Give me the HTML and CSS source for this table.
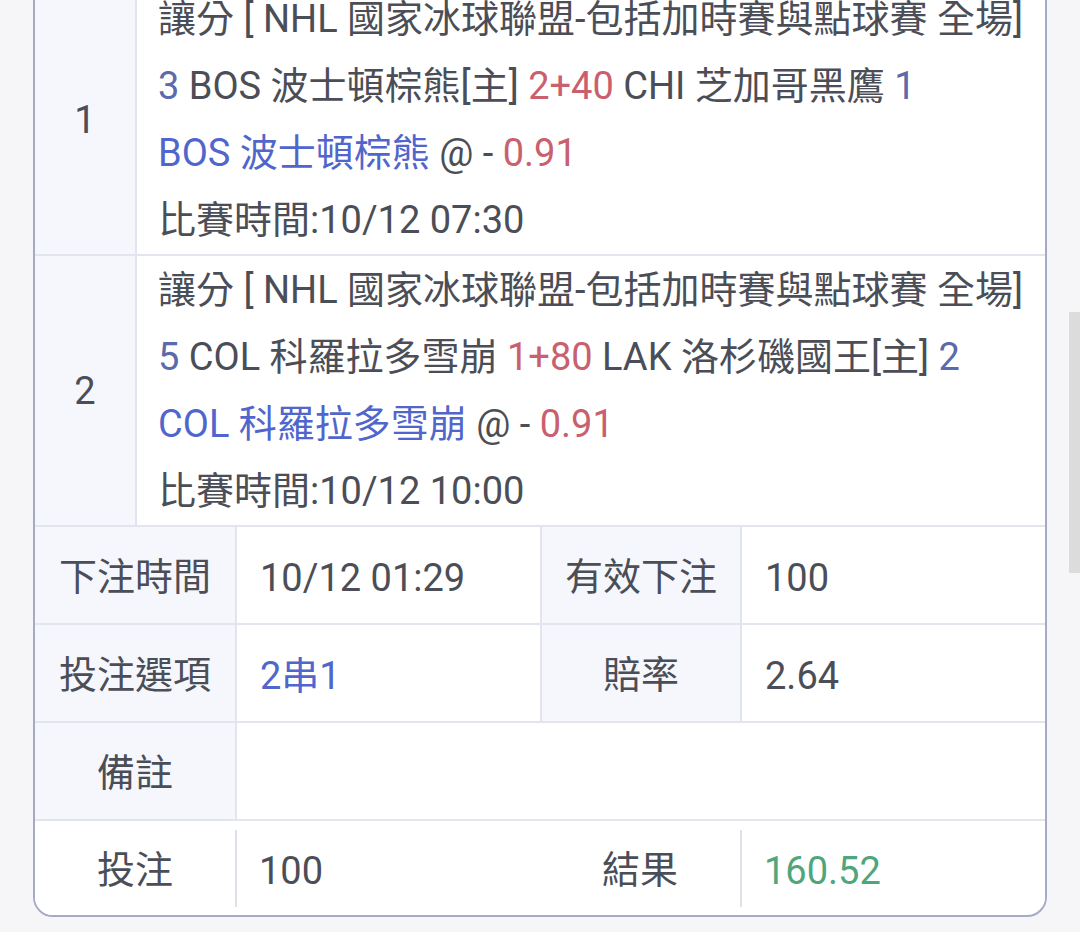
FILE: index.html
```html
<!DOCTYPE html>
<html lang="zh-Hant">
<head>
<meta charset="utf-8">
<title>注單詳情</title>
<link rel="stylesheet" href="styles.css">
</head>
<body>
<div class="card">
  <div class="leg">
    <div class="leg-idx">1</div>
    <div class="leg-body">
      <div class="line">讓分 [ NHL 國家冰球聯盟-包括加時賽與點球賽 全場]</div>
      <div class="line"><span class="score">3</span> BOS 波士頓棕熊[主] <span class="red">2+40</span> CHI 芝加哥黑鷹 <span class="score">1</span></div>
      <div class="line"><span class="blue">BOS 波士頓棕熊</span> @ - <span class="red">0.91</span></div>
      <div class="line">比賽時間:10/12 07:30</div>
    </div>
  </div>
  <div class="leg">
    <div class="leg-idx">2</div>
    <div class="leg-body">
      <div class="line">讓分 [ NHL 國家冰球聯盟-包括加時賽與點球賽 全場]</div>
      <div class="line"><span class="score">5</span> COL 科羅拉多雪崩 <span class="red">1+80</span> LAK 洛杉磯國王[主] <span class="score">2</span></div>
      <div class="line"><span class="blue">COL 科羅拉多雪崩</span> @ - <span class="red">0.91</span></div>
      <div class="line">比賽時間:10/12 10:00</div>
    </div>
  </div>
  <div class="row">
    <div class="lbl">下注時間</div>
    <div class="val">10/12 01:29</div>
    <div class="lbl lbl2">有效下注</div>
    <div class="val val2">100</div>
  </div>
  <div class="row">
    <div class="lbl">投注選項</div>
    <div class="val blue">2串1</div>
    <div class="lbl lbl2">賠率</div>
    <div class="val val2">2.64</div>
  </div>
  <div class="row">
    <div class="lbl">備註</div>
    <div class="val wide"></div>
  </div>
  <div class="row last">
    <div class="lbl plain">投注</div>
    <div class="val sep">100</div>
    <div class="lbl lbl2 plain">結果</div>
    <div class="val val2 sep green">160.52</div>
  </div>
</div>
<div class="scrollbar"></div>
</body>
</html>
```

FILE: styles.css
```css
html, body {
  margin: 0;
  padding: 0;
}
body {
  background: #f6f6f8;
  font-family: Roboto, "Noto Sans CJK TC", sans-serif;
  font-size: 38px;
  color: #4b4e57;
  height: 932px;
  overflow: hidden;
  position: relative;
}
* {
  box-sizing: border-box;
}
.card {
  margin: -17px 33px 0;
  background: #ffffff;
  border: 2px solid #a7aac7;
  border-radius: 0 0 20px 20px;
  overflow: hidden;
}
.leg {
  display: flex;
  border-bottom: 2px solid #e3e5ee;
}
.leg-idx {
  width: 102px;
  flex: none;
  background: #f5f7fc;
  border-right: 2px solid #e3e5ee;
  display: flex;
  align-items: center;
  justify-content: center;
}
.leg-body {
  flex: 1;
  padding: 1px 14px 0 21px;
  line-height: 67px;
}
.line {
  white-space: nowrap;
}
.score { color: #5a6aab; }
.blue { color: #5166cc; }
.red { color: #c9606d; }
.green { color: #4fa57c; }
.row {
  display: flex;
  height: 98px;
  border-bottom: 2px solid #e3e5ee;
  line-height: 48px;
}
.row.last {
  border-bottom: none;
  height: 94px;
}
.lbl {
  width: 202px;
  flex: none;
  background: #f5f7fc;
  border-right: 2px solid #e3e5ee;
  display: flex;
  align-items: center;
  justify-content: center;
  padding-top: 3px;
}
.lbl.lbl2 {
  width: 200px;
}
.val {
  width: 305px;
  flex: none;
  padding-left: 23px;
  padding-top: 6px;
  display: flex;
  align-items: center;
  background: #ffffff;
  border-right: 2px solid #e3e5ee;
}
.val.blue { color: #5166cc; }
.val2 {
  flex: 1;
  width: auto;
  border-right: none;
}
.val.wide {
  flex: 1;
  border-right: none;
}
.lbl.plain {
  background: #ffffff;
  border-right: none;
  width: 200px;
}
.lbl.lbl2.plain {
  width: 200px;
}
.val.sep {
  border-left: 2px solid #dfe1e8;
  border-right: none;
  margin: 9px 0 8px;
  padding-top: 4px;
  padding-left: 22px;
}
.scrollbar {
  position: absolute;
  right: 0;
  top: 312px;
  width: 11px;
  height: 261px;
  background: #dcdcdc;
}
```
